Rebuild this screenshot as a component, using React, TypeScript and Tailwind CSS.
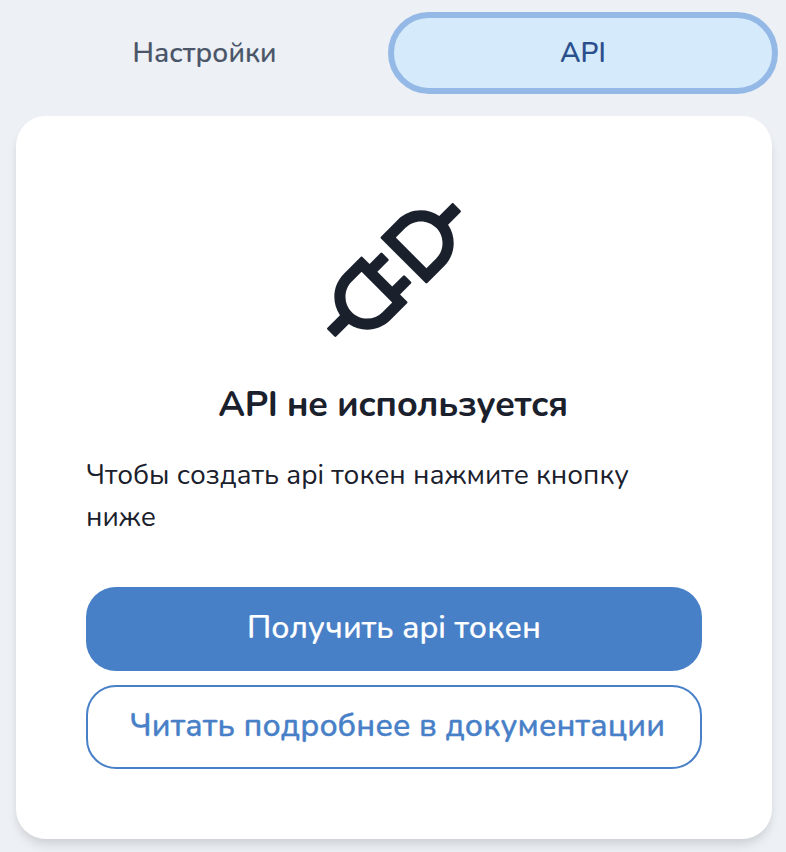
import { AiOutlineApi } from "react-icons/ai";

export default function App() {
  return (
    <div className="min-h-[852px] w-full overflow-hidden bg-[#edf1f6] pt-3 pr-2 font-['Nunito','Open_Sans','Noto_Sans',sans-serif] text-[#1a202c]">
      <nav className="flex h-[82px] pl-[21px] text-[28px] font-medium leading-[42px]">
        <button className="flex flex-1 items-center justify-center text-[#4a5568]">
          <span className="tracking-[0.12px] [-webkit-text-stroke:0.2px_currentColor]">Настройки</span>
        </button>
        <button className="flex w-[390px] items-center justify-center rounded-full border-6 border-[#95b9e6] bg-[#d5ebfc] text-[#2a4e8c]">
          <span className="tracking-[0.1px] [-webkit-text-stroke:0.2px_currentColor]">API</span>
        </button>
      </nav>
      <main className="mt-[22px] ml-4 flex h-[723px] w-[756px] flex-col items-center rounded-[30px] bg-white px-[70px] pt-[70px] shadow-[0_8px_12px_-2px_rgba(0,0,0,0.1),0_4px_8px_-2px_rgba(0,0,0,0.06)]">
        <AiOutlineApi className="size-[168px] shrink-0" />
        <h1 className="mt-6 whitespace-nowrap pr-[2px] text-[36px] font-bold leading-[54px] tracking-[-0.45px]">API не используется</h1>
        <p className="mt-[22px] w-full text-[28px] leading-[42px]">
          <span className="block whitespace-nowrap">Чтобы создать api токен нажмите кнопку</span>
          <span className="block">ниже</span>
        </p>
        <button className="mt-[49px] flex h-[84px] w-full shrink-0 items-center justify-center rounded-[30px] bg-[#4880c8] pb-[2px] text-[32px] font-medium text-white">
          <span className="whitespace-nowrap tracking-[0.1px] [-webkit-text-stroke:0.2px_currentColor]">Получить api токен</span>
        </button>
        <button className="mt-[14px] flex h-[84px] w-full shrink-0 items-center justify-center rounded-[30px] border-2 border-[#4880c8] pb-[2px] pl-[7px] text-[32px] font-medium text-[#4880c8]">
          <span className="whitespace-nowrap tracking-[0.16px] [-webkit-text-stroke:0.4px_currentColor]">Читать подробнее в документации</span>
        </button>
      </main>
    </div>
  );
}
